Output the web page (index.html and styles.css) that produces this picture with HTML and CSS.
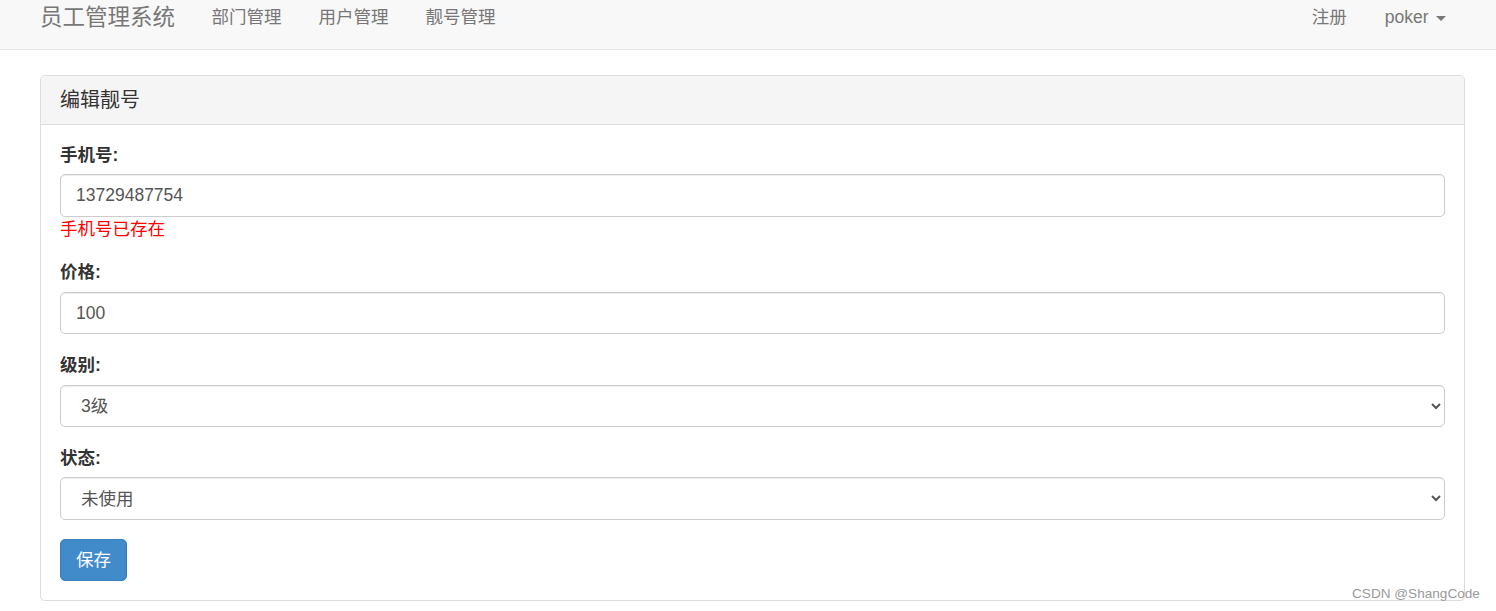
FILE: index.html
```html
<!DOCTYPE html>
<html>
	<head>
		<meta charset="utf-8">
		<title>编辑靓号</title>
		<link rel="stylesheet" href="styles.css">
	</head>

	<body>
		<nav class="navbar">
			<div class="nav-inner">
				<a class="brand" href="#">员工管理系统</a>
				<ul class="nav">
					<li><a href="#">部门管理</a></li>
					<li><a href="#">用户管理</a></li>
					<li><a href="#">靓号管理</a></li>
				</ul>
				<ul class="nav nav-right">
					<li><a href="#">注册</a></li>
					<li><a href="#">poker <span class="caret"></span></a></li>
				</ul>
			</div>
		</nav>

		<div class="container">
			<div class="panel">
				<div class="panel-heading">编辑靓号</div>
				<div class="panel-body">
					<form>
						<div class="form-group">
							<label>手机号:</label>
							<input class="form-control" type="text" value="13729487754">
							<span class="error">手机号已存在</span>
						</div>
						<div class="form-group">
							<label>价格:</label>
							<input class="form-control" type="text" value="100">
						</div>
						<div class="form-group">
							<label>级别:</label>
							<select class="form-control">
								<option>1级</option>
								<option>2级</option>
								<option selected>3级</option>
								<option>4级</option>
							</select>
						</div>
						<div class="form-group">
							<label>状态:</label>
							<select class="form-control">
								<option selected>未使用</option>
								<option>已占用</option>
							</select>
						</div>
						<button type="button" class="btn">保存</button>
					</form>
				</div>
			</div>
		</div>

		<div class="watermark">CSDN @ShangCode</div>
	</body>
</html>
```

FILE: styles.css
```css
*{
	box-sizing:border-box;
}
body{
	margin:0;
	font-family:"Liberation Sans", Arial, "Noto Sans CJK SC", sans-serif;
	font-size:17.5px;
	line-height:25px;
	color:#333;
	background:#fff;
}
a{
	text-decoration:none;
}

/* top bar */
.navbar{
	background:#f8f8f8;
	border-bottom:1px solid #e7e7e7;
	height:50px;
	margin-bottom:25px;
}
.nav-inner{
	display:flex;
	align-items:flex-start;
	padding:5px 32px 0 40px;
}
.brand{
	font-size:22.5px;
	line-height:27px;
	color:#777;
	margin-top:-1px;
	margin-right:18px;
}
.nav{
	display:flex;
	list-style:none;
	margin:0;
	padding:0;
}
.nav li a{
	display:block;
	padding:0 18.5px;
	color:#777;
	line-height:25px;
}
.nav-right{
	margin-left:auto;
}
.nav-right li:first-child a{
	padding-right:19.5px;
}
.caret{
	display:inline-block;
	width:0;
	height:0;
	margin-left:2px;
	vertical-align:middle;
	border-top:5px solid #777;
	border-left:5px solid transparent;
	border-right:5px solid transparent;
}

/* panel */
.container{
	padding:0 31px 0 40px;
}
.panel{
	border:1px solid #ddd;
	border-radius:5px;
	background:#fff;
	box-shadow:0 1px 1px rgba(0,0,0,.05);
}
.panel-heading{
	background:#f5f5f5;
	border-bottom:1px solid #ddd;
	border-radius:4px 4px 0 0;
	padding:12px 19px;
	font-size:20px;
	line-height:24px;
	color:#333;
}
.panel-body{
	padding:17.5px 19px 18.5px 19px;
}
.form-group{
	margin-bottom:18.75px;
}
.form-group label{
	display:block;
	font-weight:bold;
	margin-bottom:6.5px;
}
.form-control{
	display:block;
	width:100%;
	height:42.5px;
	padding:7.5px 15px;
	font-family:inherit;
	font-size:17.5px;
	line-height:25px;
	color:#555;
	background:#fff;
	border:1px solid #ccc;
	border-radius:5px;
	box-shadow:inset 0 1px 1px rgba(0,0,0,.075);
}
select.form-control{
	padding-left:16px;
}
.error{
	display:block;
	color:red;
}
.btn{
	display:inline-block;
	height:42.5px;
	padding:0 15px 3px 15px;
	font-family:inherit;
	font-size:17.5px;
	color:#fff;
	background:#428bca;
	border:1px solid #357ebd;
	border-radius:5px;
	cursor:pointer;
}

.watermark{
	position:absolute;
	left:1352px;
	top:585px;
	font-size:13.6px;
	line-height:18px;
	color:#9a9a9a;
}
```
